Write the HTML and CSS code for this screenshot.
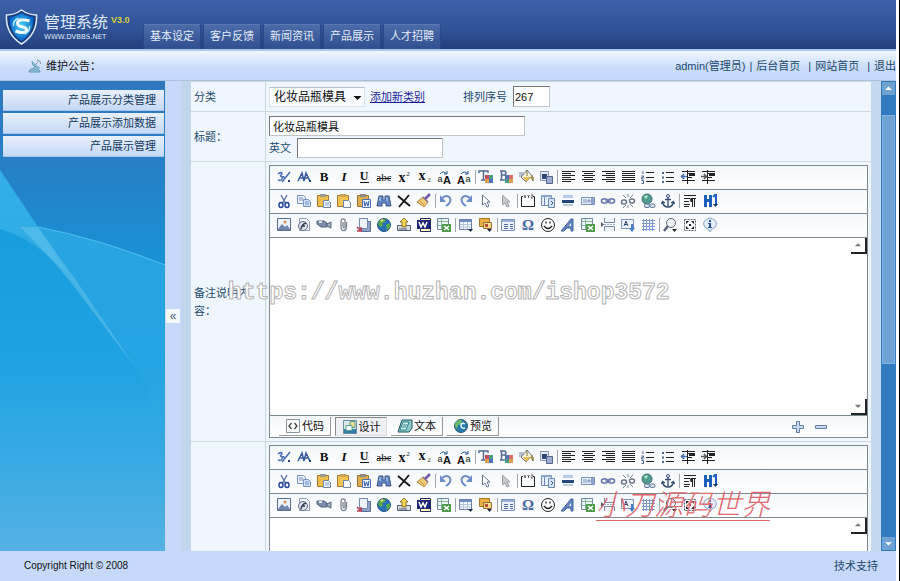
FILE: index.html
```html
<!DOCTYPE html>
<html lang="zh-CN">

<head>
    <meta charset="UTF-8">
    <meta name="viewport" content="width=device-width, initial-scale=1.0">
    <title>管理系统</title>
    <link rel="stylesheet" href="styles.css">
</head>

<body>
    <!-- Icons -->
    <svg class="sprite" aria-hidden="true">
        <symbol id="i-style" viewBox="0 0 16 16"><path d="M2 5q2-2 4-1 0 2-2 3 3 0 2 3-1 2-4 1M6 8q2-1 3 2M6 13l8-10" fill="none" stroke="#4a6fb8" stroke-width="1.6"/><path d="M12 11h2v2h-2z" fill="#26457f"/></symbol>
        <symbol id="i-font" viewBox="0 0 16 16"><path d="M2 12l4-8 2 8M3 9h5M8 12l2-8 4 8M9 9h3" fill="none" stroke="#3c5f9f" stroke-width="1.6"/><path d="M13 11h2v2h-2z" fill="#26457f"/></symbol>
        <symbol id="i-bold" viewBox="0 0 16 16"><text class="g-serif g-b" x="8" y="12" font-size="13">B</text></symbol>
        <symbol id="i-italic" viewBox="0 0 16 16"><text class="g-serif g-b" x="8" y="12" font-size="13" font-style="italic">I</text></symbol>
        <symbol id="i-underline" viewBox="0 0 16 16"><text class="g-serif g-b" x="8" y="11" font-size="12">U</text><path d="M4 13.500h9" stroke="#111"/></symbol>
        <symbol id="i-strike" viewBox="0 0 16 16"><text class="g-serif" x="8" y="12" font-size="11">abc</text><path d="M1 9.500h14" stroke="#111"/></symbol>
        <symbol id="i-sup" viewBox="0 0 16 16"><text class="g-serif g-b" x="6" y="13" font-size="14">x</text><text class="g-serif" x="12" y="7" font-size="7">2</text></symbol>
        <symbol id="i-sub" viewBox="0 0 16 16"><text class="g-serif g-b" x="6" y="11" font-size="14">x</text><text class="g-serif" x="13" y="13" font-size="7">2</text></symbol>
        <symbol id="i-upper" viewBox="0 0 16 16"><text class="g-sans" x="4" y="13" font-size="9">a</text><text class="g-sans g-b" x="11" y="15" font-size="11">A</text><path d="M4 5q3-4 7 0M11 2v3H8" fill="none" stroke="#27568f"/></symbol>
        <symbol id="i-lower" viewBox="0 0 16 16"><text class="g-sans g-b" x="5" y="15" font-size="11">A</text><text class="g-sans" x="12" y="13" font-size="9">a</text><path d="M5 5q3-4 7 0M12 2v3H9" fill="none" stroke="#27568f"/></symbol>
        <symbol id="i-color" viewBox="0 0 16 16"><path d="M1 4V2h9v2M5.500 2v9M3 11h4" fill="none" stroke="#536a94" stroke-width="1.500"/><path d="M7 6h4v4H7z" fill="#c44d60"/><path d="M11 6h4v4h-4z" fill="#4c9a80"/><path d="M7 10h4v4H7z" fill="#dfa04d"/><path d="M11 10h4v4h-4z" fill="#4d70bb"/></symbol>
        <symbol id="i-bgcolor" viewBox="0 0 16 16"><path d="M2 2h5q2 2 0 4H3h4q3 3 0 5H2M3.500 2v9" fill="none" stroke="#536a94" stroke-width="1.500"/><path d="M7 6h4v4H7z" fill="#5171b7"/><path d="M11 6h4v4h-4z" fill="#d76c70"/><path d="M7 10h4v4H7z" fill="#4c9a80"/><path d="M11 10h4v4h-4z" fill="#d9a251"/></symbol>
        <symbol id="i-bucket" viewBox="0 0 16 16"><path d="M1 3h5v5H1z" fill="#b7c1d2"/><path d="M9 1l5 6-6 6-5-5z" fill="#f8f3d6" stroke="#6d7690"/><path d="M9 1v6M14 6q2 3 1 6l-2-4" fill="#e8b03c" stroke="#7f744b"/><path d="M5 8h8l-5 5z" fill="#edbd54"/></symbol>
        <symbol id="i-layer" viewBox="0 0 16 16"><path d="M2.500 2.500h8v9h-8z" fill="#e7ecf7" stroke="#8291b0"/><path d="M4 5h5v5H4z" fill="#2d4578"/><path d="M8.500 7.500h6v7h-6z" fill="#9eadd0" stroke="#56688f"/></symbol>
        <symbol id="i-left" viewBox="0 0 16 16"><path d="M2 2.500h13M2 4.500h9M2 6.500h13M2 8.500h9M2 10.500h13M2 12.500h9" stroke="#222"/></symbol>
        <symbol id="i-center" viewBox="0 0 16 16"><path d="M2 2.500h13M4 4.500h9M2 6.500h13M4 8.500h9M2 10.500h13M4 12.500h9" stroke="#222"/></symbol>
        <symbol id="i-right" viewBox="0 0 16 16"><path d="M2 2.500h13M6 4.500h9M2 6.500h13M6 8.500h9M2 10.500h13M6 12.500h9" stroke="#222"/></symbol>
        <symbol id="i-justify" viewBox="0 0 16 16"><path d="M2 2.500h13M2 4.500h13M2 6.500h13M2 8.500h13M2 10.500h13M2 12.500h13" stroke="#222"/></symbol>
        <symbol id="i-ol" viewBox="0 0 16 16"><path d="M6 3.500h8M6 8.500h8M6 12.500h8" stroke="#222"/><path d="M3 2v3M1.500 7h2v1.500h-2V10h2M1.500 11.500h2v3h-2" fill="none" stroke="#4e6290"/></symbol>
        <symbol id="i-ul" viewBox="0 0 16 16"><path d="M6 3.500h8M6 8.500h8M6 12.500h8" stroke="#222"/><path d="M2 3h2v2H2zM2 7.500h2v2H2zM2 12h2v2H2z" fill="#4e6290"/></symbol>
        <symbol id="i-outdent" viewBox="0 0 16 16"><path d="M2 2.500h13M8 4.500h7M8 8.500h4M2 11.500h13M7.500 1v14" stroke="#222"/><path d="M9 5h6v2H9z" fill="#222"/><path d="M7 7.500H2M4 5L1.500 7.500 4 10" fill="none" stroke="#426bb0" stroke-width="1.500"/></symbol>
        <symbol id="i-indent" viewBox="0 0 16 16"><path d="M2 2.500h13M8 4.500h7M8 8.500h4M2 11.500h13M7.500 1v14" stroke="#222"/><path d="M9 5h6v2H9z" fill="#222"/><path d="M1 7.500h5M4 5l2.500 2.500L4 10" fill="none" stroke="#555" stroke-width="1.500"/></symbol>

        <symbol id="i-cut" viewBox="0 0 16 16"><path d="M5 2l5 9M11 2L6 11" stroke="#6279a8" stroke-width="1.500"/><ellipse cx="5" cy="12" rx="2" ry="2.500" fill="none" stroke="#27479a" stroke-width="1.500"/><ellipse cx="11" cy="12" rx="2" ry="2.500" fill="none" stroke="#27479a" stroke-width="1.500"/></symbol>
        <symbol id="i-copy" viewBox="0 0 16 16"><path d="M1.500 2.500h6l2 2v6h-8z" fill="#edf3ff" stroke="#7792c5"/><path d="M3 5h4M3 7h4" stroke="#7792c5"/><path d="M7.500 6.500h5l2 2v5h-7z" fill="#ccdcf7" stroke="#7792c5"/><path d="M9 9h4M9 11h4" stroke="#7792c5"/></symbol>
        <symbol id="i-paste" viewBox="0 0 16 16"><path d="M1.500 2.500h11v11h-11z" fill="#eebd4b" stroke="#9c7833"/><path d="M4 1h6v3H4z" fill="#9d9b91"/><path d="M7.500 7.500h5l2 2v5h-7z" fill="#f8fbff" stroke="#6c84b0"/><path d="M9 10h4M9 12h4" stroke="#8097c2"/></symbol>
        <symbol id="i-pastetext" viewBox="0 0 16 16"><path d="M1.500 2.500h11v11h-11z" fill="#f0c353" stroke="#9c7833"/><path d="M4 1h6v3H4z" fill="#c8a359"/><path d="M7.500 7.500h5l2 2v5h-7z" fill="#fff" stroke="#6c84b0"/></symbol>
        <symbol id="i-pasteword" viewBox="0 0 16 16"><path d="M1.500 2.500h11v11h-11z" fill="#dcae4b" stroke="#8c7541"/><path d="M4 1h6v3H4z" fill="#8e8d85"/><path d="M6.500 6.500h8v8h-8z" fill="#e6efff" stroke="#4b70b4"/><path d="M8 8l1 5 1.500-4 1.500 4 1-5" fill="none" stroke="#2f57a5"/></symbol>
        <symbol id="i-find" viewBox="0 0 16 16"><path d="M3 3h4v4h2V3h4l2 10h-5v-3H6v3H1z" fill="#6285c1" stroke="#3b5588"/><path d="M4 4v4M11 4v4" stroke="#c5d7f5"/></symbol>
        <symbol id="i-delete" viewBox="0 0 16 16"><path d="M2 3l12 10M13 2L3 14" stroke="#111" stroke-width="1.800"/></symbol>
        <symbol id="i-clean" viewBox="0 0 16 16"><path d="M14 1l-5 5" stroke="#755b9a" stroke-width="2.500"/><path d="M7 4l5 5-4 5-7-5z" fill="#f0ca75" stroke="#b18a3d"/><path d="M7 4l5 5" stroke="#7d6a8f" stroke-width="1.500"/><path d="M4 8l4 4" stroke="#c9923a"/></symbol>
        <symbol id="i-undo" viewBox="0 0 16 16"><path d="M4 5q5-4 8 0 2 4-4 8" fill="none" stroke="#6b8cc9" stroke-width="2"/><path d="M2 2v7h6z" fill="#6b8cc9"/></symbol>
        <symbol id="i-redo" viewBox="0 0 16 16"><path d="M12 5q-5-4-8 0-2 4 4 8" fill="none" stroke="#6b8cc9" stroke-width="2"/><path d="M14 2v7H8z" fill="#6b8cc9"/></symbol>
        <symbol id="i-select" viewBox="0 0 16 16"><path d="M4.500 2v10l2.500-2 2 4 2-1-2-4h3z" fill="#fff" stroke="#66738f"/></symbol>
        <symbol id="i-unselect" viewBox="0 0 16 16"><path d="M4.500 2v10l2.500-2 2 4 2-1-2-4h3z" fill="#c6c9d0" stroke="#9b9fa8"/></symbol>
        <symbol id="i-fieldset" viewBox="0 0 16 16"><path d="M3 3.500H1.500v10h13v-10H13" fill="none" stroke="#222"/><path d="M4 2l2 3M6 2L4 5M7.500 2l1 1.500L9.500 2M8.500 3v2M11 2h2l-2 3h2" fill="none" stroke="#444" stroke-width=".8"/></symbol>
        <symbol id="i-iframe" viewBox="0 0 16 16"><path d="M1.500 2.500h10v10h-10z" fill="#e6effc" stroke="#6f87af"/><path d="M1 2h11v2H1z" fill="#8aa4ce"/><path d="M4.500 4v8" stroke="#6f87af"/><path d="M8.500 5.500h6v9h-6z" fill="#d6e3f8" stroke="#6f87af"/><path d="M11 8l2 2-2 2" fill="none" stroke="#315f9e"/></symbol>
        <symbol id="i-hr" viewBox="0 0 16 16"><path d="M3 2h10v3H3zM3 11h10v2H3z" fill="#b5cbec"/><path d="M2 7h12v3H2z" fill="#26457f"/></symbol>
        <symbol id="i-marquee" viewBox="0 0 16 16"><path d="M1.500 4.500h13v7h-13z" fill="#e7eef9" stroke="#7d93b9"/><path d="M4 6v4M6 6v4M8 7h2v2H8z" stroke="#7d93b9" fill="none"/><path d="M11 5h3v6h-3z" fill="#8ba4cf"/></symbol>
        <symbol id="i-link" viewBox="0 0 16 16"><rect x="1.500" y="6" width="6" height="4" rx="2" fill="none" stroke="#5d75a4" stroke-width="1.500"/><rect x="8.500" y="6" width="6" height="4" rx="2" fill="none" stroke="#5d75a4" stroke-width="1.500"/><path d="M5 8h6" stroke="#5d75a4"/></symbol>
        <symbol id="i-unlink" viewBox="0 0 16 16"><rect x="1.500" y="7" width="5" height="4" rx="2" fill="none" stroke="#6a7488" stroke-width="1.500"/><rect x="9.500" y="6" width="5" height="4" rx="2" fill="none" stroke="#6a7488" stroke-width="1.500"/><path d="M3 2l3 3M8 1v3M13 2l-3 3M3 15l3-3M8 15v-3M13 14l-3-3" stroke="#7a8394"/></symbol>
        <symbol id="i-maplink" viewBox="0 0 16 16"><circle cx="7" cy="6" r="5" fill="#4d9c8d" stroke="#3d6f80"/><path d="M4 4q2-3 4-1l-2 3z" fill="#b9e3c6"/><rect x="4.500" y="11" width="5" height="3.500" rx="1.500" fill="#dce4f1" stroke="#5d6f93"/><rect x="10" y="11" width="5" height="3.500" rx="1.500" fill="#dce4f1" stroke="#5d6f93"/></symbol>
        <symbol id="i-anchor" viewBox="0 0 16 16"><circle cx="8" cy="3" r="1.500" fill="none" stroke="#354b73"/><path d="M8 4.500V14M5 6.500h6M2.500 9q1 5 5.500 5t5.500-5M1.500 11l1-2.500L5 10M14.500 11l-1-2.500L11 10" fill="none" stroke="#354b73" stroke-width="1.300"/></symbol>
        <symbol id="i-para" viewBox="0 0 16 16"><path d="M2 2.500h12M2 5.500h6M2 8.500h5M2 11.500h6M2 13.500h5M10.500 5v9M12.500 5v9M9 5.500h5" stroke="#222"/><path d="M11 5H9q-2 2 0 4h2z" fill="#222"/></symbol>
        <symbol id="i-h1" viewBox="0 0 16 16"><path d="M2 2h3v4h2V2h3v12H7V9H5v5H2z" fill="#1e5fbd"/><path d="M11 4l2-2h1v9" fill="none" stroke="#1e5fbd" stroke-width="2"/><path d="M11 11h5l-2.500 3z" fill="#1b3266"/></symbol>

        <symbol id="i-image" viewBox="0 0 16 16"><path d="M1.500 1.500h13v12h-13z" fill="#eef4fc" stroke="#5c6f92"/><path d="M2 12l4-5 3 3 2-2 3 4v1H2z" fill="#6f85ad"/><circle cx="9" cy="5" r="1.500" fill="#d88d55"/></symbol>
        <symbol id="i-flash" viewBox="0 0 16 16"><path d="M3.500 1.500h7l3 3v9h-10z" fill="#eff3fa" stroke="#93a0b9"/><circle cx="7" cy="9" r="4.500" fill="#dde3ec" stroke="#636e83"/><path d="M5 12q1-5 5-6M6 9h3" fill="none" stroke="#35415b" stroke-width="1.500"/></symbol>
        <symbol id="i-media" viewBox="0 0 16 16"><path d="M1 4h7l3 2v4H5L1 7z" fill="#7b8da8" stroke="#53627b"/><path d="M11 7l4-2v6l-4-2z" fill="#a2b0c5" stroke="#53627b"/><path d="M3 4h3v2H3z" fill="#dce5f1"/></symbol>
        <symbol id="i-attach" viewBox="0 0 16 16"><path d="M10.500 5v6q-1 3-3.500 2.500-2-.5-2-3V4q.5-2.500 2.500-2T9 4v6q-1 2-2 0V5" fill="none" stroke="#7d8593" stroke-width="1.300"/></symbol>
        <symbol id="i-file" viewBox="0 0 16 16"><path d="M5.500 4.500h9v10h-9z" fill="#8fa3c6" stroke="#5b6f97"/><path d="M3.500 1.500h8v10h-8z" fill="#edf3fc" stroke="#7488ad"/><path d="M1 10l4 4M1 14h4v-4" fill="none" stroke="#bd3e4c" stroke-width="1.500"/></symbol>
        <symbol id="i-globe" viewBox="0 0 16 16"><circle cx="8" cy="8" r="6.500" fill="#2a6fb9" stroke="#244f80"/><path d="M3 4q4-3 7-2l-1 3-3 1 1 3-3 1-2-3zM10 8l4-2v4l-3 3z" fill="#59ad48"/><path d="M5 4l2-1" stroke="#f1dd69" stroke-width="2"/></symbol>
        <symbol id="i-upload" viewBox="0 0 16 16"><path d="M1.500 8.500h13v5h-13z" fill="#dcdfe6" stroke="#555e70"/><path d="M8 1L4 5h2v5h4V5h2z" fill="#f5d650" stroke="#8b7428"/><path d="M3 12h8" stroke="#555e70"/></symbol>
        <symbol id="i-word" viewBox="0 0 16 16"><path d="M4.500 1.500h10v13h-10z" fill="#fff4b3" stroke="#222b66"/><path d="M1 3h13v9H1z" fill="#1c2877"/><path d="M3 5l2 5 2-4 2 4 2-5" fill="none" stroke="#fff" stroke-width="1.500"/></symbol>
        <symbol id="i-excel" viewBox="0 0 16 16"><path d="M1.500 1.500h11v11h-11z" fill="#eef6f3" stroke="#6a8aa0"/><path d="M2 4.500h10M2 8.500h10M5.500 2v10" stroke="#8ab2a3"/><path d="M6 7h9v8H6z" fill="#4c9b4b"/><path d="M8 9l5 4M13 9l-5 4" stroke="#fff" stroke-width="1.500"/></symbol>
        <symbol id="i-table" viewBox="0 0 16 16"><path d="M1.500 2.500h12v10h-12z" fill="#f3f7fd" stroke="#6b7fa9"/><path d="M2 3h11v2H2z" fill="#6e8fc5"/><path d="M2 7.500h11M2 10h11M5.500 5v7M9.500 5v7" stroke="#b9c7df"/><path d="M10 12h5l-2.500 3z" fill="#1c2748"/></symbol>
        <symbol id="i-object" viewBox="0 0 16 16"><path d="M1.500 1.500h10v8h-10z" fill="#eab044" stroke="#a9772c"/><path d="M5.500 5.500h8v6h-8z" fill="#f6d886" stroke="#976f36"/><path d="M7 7h3v3H7z" fill="#b94d3d"/><path d="M9 12h5l-2.500 3z" fill="#1c2748"/></symbol>
        <symbol id="i-form" viewBox="0 0 16 16"><path d="M1.500 2.500h13v11h-13z" fill="#edf3fd" stroke="#7a8fb7"/><path d="M2 3h12v2H2z" fill="#9cb1d7"/><path d="M4 7.500h4M10 7.500h3M4 9.500h4M10 9.500h3M4 11.500h4M10 11.500h3" stroke="#556b98"/></symbol>
        <symbol id="i-symbol" viewBox="0 0 16 16"><text class="g-blue g-b" x="8" y="13" font-size="15">Ω</text></symbol>
        <symbol id="i-smile" viewBox="0 0 16 16"><circle cx="8" cy="8" r="6.500" fill="#fff" stroke="#222"/><path d="M6 4.500v2M10 4.500v2M4 9q4 5 8 0" fill="none" stroke="#222" stroke-width="1.300"/></symbol>
        <symbol id="i-art" viewBox="0 0 16 16"><path d="M13 2v12h-2v-3H7l-3 3H1L11 2z" fill="#6284c0" stroke="#4462a0"/><path d="M11 6v3H9z" fill="#fff"/></symbol>
        <symbol id="i-break" viewBox="0 0 16 16"><path d="M4.500 1v4.500h10V1M4.500 14V9.500h10V14" fill="#eff3fa" stroke="#7787a6"/><path d="M4 7.500h11" stroke="#99a8c5" stroke-dasharray="2 1"/><path d="M1 5l3 2.500L1 10z" fill="#555"/></symbol>
        <symbol id="i-template" viewBox="0 0 16 16"><path d="M1.500 2.500h12v9h-12z" fill="#edf3fd" stroke="#7d91b7"/><path d="M4 9l2-5 2 5M5 7.500h2" fill="none" stroke="#334767"/><path d="M11 7h2v4h2l-3 4-3-4h2z" fill="#437bd0"/></symbol>
        <symbol id="i-grid" viewBox="0 0 16 16"><path d="M3.500 2v12M6.500 2v12M9.500 2v12M12.500 2v12M2 3.500h13M2 6.500h13M2 9.500h13M2 12.500h13" stroke="#7d9ace"/></symbol>
        <symbol id="i-zoom" viewBox="0 0 16 16"><circle cx="9" cy="6" r="4.500" fill="#eef2f9" stroke="#5c6678"/><path d="M6 9l-4 5" stroke="#5c6678" stroke-width="2.500"/><path d="M10 12h5l-2.500 3z" fill="#222"/></symbol>
        <symbol id="i-full" viewBox="0 0 16 16"><path d="M2.500 2.500h11v11h-11z" fill="#f7f9fc" stroke="#5c6678" stroke-dasharray="2 1"/><path d="M4 4h3L4 7zM12 4H9l3 3zM4 12h3L4 9zM12 12H9l3-3zM7 7h2v2H7z" fill="#222"/></symbol>
        <symbol id="i-about" viewBox="0 0 16 16"><path d="M8 1q6 1 6.500 6Q14 11 10 12l-2 3-2-3Q2 11 1.500 7 2 2 8 1z" fill="#e5effb" stroke="#8aa2c6"/><path d="M7 3h2v2H7zM6 6h3v4h1v1H6v-1h1V7H6z" fill="#2a5398"/></symbol>

        <symbol id="i-code" viewBox="0 0 16 16"><path d="M1.500 1.500h13v13h-13z" fill="#f8fafb" stroke="#8a949c"/><path d="M6.500 5L4 8l2.500 3M9.500 5L12 8l-2.500 3" fill="none" stroke="#444" stroke-width="1.300"/></symbol>
        <symbol id="i-design" viewBox="0 0 16 16"><path d="M1.500 1.500h13v13h-13z" fill="#d9ece9" stroke="#6d8f9f"/><path d="M2 10h12v4H2z" fill="#327da5"/><path d="M8 2.500h5v6H8z" fill="#efe48d" stroke="#58a08d"/><path d="M4 6.500h6v5H4z" fill="#f2fbf7" stroke="#58a08d"/></symbol>
        <symbol id="i-text" viewBox="0 0 16 16"><path d="M5 2h10v8l-3 4H1z" fill="#8bcbd0" stroke="#26535f"/><path d="M6 4h6l-3 8H3z" fill="#d1f3ef" stroke="#377e88"/><path d="M6 7h4M5 9h4" stroke="#377e88"/></symbol>
        <symbol id="i-preview" viewBox="0 0 16 16"><circle cx="8" cy="8" r="6.500" fill="#267cab" stroke="#2b5471"/><path d="M2 5q3-4 7-3l-1 4-3 1-1 4q-3-3-2-6z" fill="#6dba6a"/><path d="M12 6q-3-2-4 1 0 4 4 3" fill="none" stroke="#eefcfa" stroke-width="1.500"/></symbol>
        <symbol id="i-plus" viewBox="0 0 16 16"><path d="M6.500 2.500h3v4h4v3h-4v4h-3v-4h-4v-3h4z" fill="#c4d9ef" stroke="#667f9e"/></symbol>
        <symbol id="i-minus" viewBox="0 0 16 16"><path d="M2.500 6.500h11v3h-11z" fill="#c4d9ef" stroke="#667f9e"/></symbol>
        <symbol id="i-up" viewBox="0 0 16 16"><path d="M8 5l5 5H3z" fill="currentColor"/></symbol>
        <symbol id="i-down" viewBox="0 0 16 16"><path d="M8 11L3 6h10z" fill="currentColor"/></symbol>
    </svg>

    <!-- Header -->
    <header class="header">
        <div class="logo">
            <svg class="shield" viewBox="0 0 32 36">
                <defs>
                    <radialGradient id="shield" cx=".5" cy=".45">
                        <stop offset="0" stop-color="#48d4fb" />
                        <stop offset="1" stop-color="#0c67cb" />
                    </radialGradient>
                </defs>
                <path d="M16 1q7 5 15 5 1 19-15 29Q0 25 1 6q8 0 15-5z" fill="#173c7d" stroke="#dcecfb" stroke-width="1.500" />
                <path d="M16 4q6 4 12 4 0 16-12 24Q4 24 4 8q6 0 12-4z" fill="url(#shield)" />
                <path d="M24 12q-11-3-12 2 0 3 5 4t4 4q-3 3-11 0" fill="none" stroke="#effaff" stroke-width="3" />
                <path d="M8 17q-1-5 5-8M24 17q1 5-5 8" fill="none" stroke="#bdeefd" stroke-width="1.500" />
            </svg>
            <div class="name">
                <div class="title">管理系统</div>
                <div class="site">WWW.DVBBS.NET</div>
            </div>
            <div class="version">V3.0</div>
        </div>
        <nav class="nav">
            <a href="#">基本设定</a>
            <a href="#">客户反馈</a>
            <a href="#">新闻资讯</a>
            <a href="#">产品展示</a>
            <a href="#">人才招聘</a>
        </nav>
    </header>

    <!-- Notice bar -->
    <div class="notice">
        <svg class="dish" viewBox="0 0 14 14">
            <path d="M4 2q0 7 8 7M5 10l2-3M1 12l2-2h7l2 2v1H1z" fill="#8abbd4" stroke="#6399b8" />
            <path d="M7 6l3-3M9 1q3 0 4 4" fill="none" stroke="#7c8e9d" />
        </svg>
        <span class="notice-title">维护公告：</span>
        <div class="user">
            <a href="#">admin(管理员)</a><span>|</span>
            <a href="#">后台首页</a><span class="sep">|</span><a href="#">网站首页</a><span class="sep">|</span>
            <a href="#">退出</a>
        </div>
    </div>

    <div class="main">
        <!-- Left menu -->
        <aside class="sidebar">
            <svg class="waves" viewBox="0 0 165 470" preserveAspectRatio="none" aria-hidden="true">
                <defs>
                    <linearGradient id="fade" x1="0" y1="0" x2="0" y2="1">
                        <stop offset="0" stop-color="#2fb1ea" stop-opacity=".8" />
                        <stop offset="1" stop-color="#2fb1ea" stop-opacity="0" />
                    </linearGradient>
                    <linearGradient id="deep" x1="0" y1="0" x2="0" y2="1">
                        <stop offset="0" stop-color="#109bdc" stop-opacity=".7" />
                        <stop offset=".6" stop-color="#109bdc" stop-opacity="0" />
                    </linearGradient>
                </defs>
                <path d="M0 89L38 146Q100 158 165 184V470H0z" fill="url(#fade)" />
                <path d="M0 148Q40 160 75 203L135 286Q150 310 158 342L165 470H0z" fill="url(#deep)" />
                <path d="M0 89L38 146 75 203Q40 158 0 148z" fill="#37b5e8" fill-opacity=".5" />
                <path d="M38 146L75 198 135 286 72 203Q50 175 20 146z" fill="#7ccdf0" fill-opacity=".4" />
                <path d="M38 146Q100 158 165 184" fill="none" stroke="#52c0ef" />
            </svg>
            <a href="#">产品展示分类管理</a>
            <a href="#">产品展示添加数据</a>
            <a href="#">产品展示管理</a>
        </aside>

        <div class="splitter">
            <button type="button" title="收起">«</button>
        </div>

        <!-- Product form -->
        <form class="content">
            <div class="row">
                <div class="label">分类</div>
                <div class="field line">
                    <div class="select">
                        <select aria-label="分类">
                            <option>化妆品瓶模具</option>
                        </select>
                        <svg viewBox="0 0 16 16"><use href="#i-down" /></svg>
                    </div>
                    <a class="add" href="#">添加新类别</a>
                    <label for="order">排列序号</label>
                    <input type="text" id="order" class="order" value="267">
                </div>
            </div>
            <div class="row">
                <label class="label" for="title">标题：</label>
                <div class="field">
                    <input type="text" id="title" class="cn" value="化妆品瓶模具">
                    <div class="line">
                        <label for="titleEn">英文</label>
                        <input type="text" id="titleEn" class="en">
                    </div>
                </div>
            </div>
            <div class="row">
                <div class="label">备注说明内容：</div>
                <div class="field">
                    <div class="editor"></div>
                </div>
            </div>
            <div class="row">
                <div class="label"></div>
                <div class="field">
                    <div class="editor"></div>
                </div>
            </div>
        </form>

        <div class="scroll">
            <button type="button" aria-label="向上"><svg viewBox="0 0 16 16"><use href="#i-up" /></svg></button>
            <div class="track">
                <div class="thumb"></div>
            </div>
            <button type="button" aria-label="向下"><svg viewBox="0 0 16 16"><use href="#i-down" /></svg></button>
        </div>
    </div>

    <footer class="footer">
        <span class="copy">Copyright Right © 2008</span>
        <a href="#">技术支持</a>
    </footer>

    <div class="mark mark-url">https://www.huzhan.com/ishop3572</div>
    <div class="mark mark-name">小刀源码世界</div>

    <script src="script.js"></script>
</body>

</html>
```
FILE: styles.css
```css
* {
    box-sizing: border-box;
}

body {
    margin: 0;
    height: 100vh;
    display: flex;
    flex-direction: column;
    overflow: hidden;
    padding-right: 3px;
    border-right: 1px solid black;
    background-color: white;
    color: #1d4a6c;
    font-family: "Liberation Sans", "Noto Sans CJK SC", sans-serif;
    font-size: 11px;
    line-height: 18px;
}

a {
    color: inherit;
    text-decoration: none;
}

input,
select,
button,
textarea {
    font: inherit;
    margin: 0;
    border-radius: 0;
}

button {
    display: flex;
    align-items: center;
    justify-content: center;
    padding: 0;
    border: none;
    background: none;
}

.sprite {
    display: none;
}

.g-serif,
.g-sans,
.g-blue {
    text-anchor: middle;
    fill: #111;
    font-family: "Liberation Serif", serif;
}

.g-sans {
    font-family: "Liberation Sans", sans-serif;
}

.g-blue {
    fill: #4465a8;
}

.g-b {
    font-weight: 700;
}

/* header */
.header {
    flex: none;
    display: flex;
    align-items: flex-end;
    height: 49px;
    background: linear-gradient(#3d61a9, #305296 60%, #243f7d);
}

.logo {
    display: flex;
    align-items: flex-start;
    width: 143px;
    height: 40px;
    padding-left: 5px;
}

.shield {
    width: 33px;
    height: 36px;
}

.name {
    margin: 4px 3px 0 6px;
    color: #dfe9f7;
}

.title {
    font-size: 16px;
    line-height: 20px;
}

.site {
    font-family: "DejaVu Sans", sans-serif;
    font-size: 7px;
    line-height: 9px;
}

.version {
    color: #d3d03c;
    font-size: 9px;
    font-weight: 700;
    line-height: 22px;
}

.nav {
    display: flex;
    gap: 2px;
}

.nav a {
    width: 58px;
    height: 25px;
    border: 1px solid #2a478a;
    border-top-color: #5877b3;
    border-bottom: none;
    border-radius: 2px 2px 0 0;
    background: linear-gradient(#4b6ba8, #2f4f90);
    color: #e3ecfa;
    line-height: 23px;
    text-align: center;
}

/* notice bar */
.notice {
    flex: none;
    display: flex;
    align-items: center;
    height: 32px;
    padding-left: 28px;
    border-top: 2px solid #a9c9ec;
    border-bottom: 1px solid #adc3dd;
    background: linear-gradient(#f0f6ff, #c9dcfb 60%, #c5d9fa);
}

.dish {
    width: 14px;
    height: 14px;
    margin-right: 4px;
}

.notice-title {
    color: #111;
}

.user {
    display: flex;
    gap: 4px;
    margin-left: auto;
}

.user .sep {
    margin-left: 4px;
}

/* main */
.main {
    flex: 1;
    min-height: 0;
    display: flex;
}

.sidebar {
    position: relative;
    flex: none;
    display: flex;
    flex-direction: column;
    gap: 2px;
    width: 165px;
    padding: 9px 1px 0 3px;
    background: linear-gradient(#2f78bf, #2581c8 20%, #1893d6 40%, #1d9ddf 60%, #56b2e4);
}

.waves {
    position: absolute;
    inset: 0;
    width: 100%;
    height: 100%;
}

.sidebar a {
    position: relative;
    height: 21px;
    padding-right: 8px;
    border-bottom: 1px solid #a9c4e8;
    background: linear-gradient(#e8f0fc, #c4d8f6);
    color: #14395c;
    line-height: 20px;
    text-align: right;
}

.splitter {
    flex: none;
    display: flex;
    align-items: center;
    width: 26px;
    border-right: 10px solid #c1d5ec;
    background-color: #c6d9f9;
}

.splitter button {
    width: 14px;
    height: 14px;
    margin: 0 1px;
    background-color: #f3f8fc;
    color: #4c5f70;
    font-size: 12px;
}

.content {
    flex: 1;
    min-width: 0;
    display: flex;
    flex-direction: column;
    overflow: hidden;
    border-right: 10px solid #c4daee;
    background-color: #eff6fe;
}

.row {
    flex: none;
    display: flex;
    border-top: 1px solid #cbd8e2;
}

.label {
    flex: none;
    display: flex;
    align-items: center;
    width: 75px;
    padding: 0 14px 0 3px;
    border-right: 1px solid #cbd8e2;
}

.field {
    flex: 1;
    min-width: 0;
    padding: 3px;
}

.line {
    display: flex;
    align-items: center;
}

.field input {
    display: block;
    height: 20px;
    padding: 0 3px;
    border: 1px solid #c0c4c8;
    border-top-color: #777;
    border-left-color: #777;
    background-color: white;
    color: #111;
}

.field .order {
    width: 37px;
    height: 21px;
    padding: 0 1px;
    margin-left: 6px;
}

.row:first-child .field {
    height: 29px;
}

.field .cn {
    width: 256px;
    margin: 1px 0 2px;
}

.field .en {
    width: 146px;
    margin-left: 6px;
}

.select {
    position: relative;
    margin-right: 5px;
}

.select select {
    appearance: none;
    display: block;
    width: 96px;
    height: 20px;
    padding: 0 4px;
    border: 1px solid #dde4ea;
    border-top-color: #b9c0c6;
    background-color: #f7fafe;
    color: #111;
    font-size: 12px;
}

.select svg {
    position: absolute;
    top: 4px;
    right: 1px;
    width: 13px;
    height: 13px;
    color: #111;
    pointer-events: none;
}

.add {
    margin-right: 38px;
    color: #1d1f9a;
    text-decoration: underline;
}

/* editor */
.editor {
    border: 1px solid #7e8a92;
    background-color: white;
}

.tools {
    display: flex;
    align-items: center;
    height: 24px;
    padding: 0 0 2px 4px;
    border-bottom: 1px solid #7e8a92;
    background: linear-gradient(#f4f8fb, #fff);
}

.tools button {
    width: 20px;
    height: 20px;
}

.tools svg,
.modes svg {
    width: 16px;
    height: 16px;
}

.tools i {
    width: 2px;
    height: 14px;
    border-right: 1px solid #a0a8b0;
}

.area {
    display: flex;
    height: 178px;
    border-bottom: 1px solid #7e8a92;
}

.area textarea {
    flex: 1;
    border: none;
    outline: none;
    resize: none;
}

.area div {
    display: flex;
    flex-direction: column;
    justify-content: space-between;
}

.area button {
    width: 16px;
    height: 16px;
    border-right: 2px solid #222;
    border-bottom: 2px solid #222;
    color: #777;
}

.area svg {
    width: 10px;
    height: 10px;
}

.modes {
    display: flex;
    align-items: center;
    gap: 4px;
    height: 21px;
    padding: 0 38px 0 9px;
    background: linear-gradient(#f4f8fb, #fff);
}

.modes button {
    gap: 1px;
    width: 52px;
    height: 19px;
    border-right: 1px solid #999;
    border-bottom: 1px solid #999;
    color: #111;
}

.modes .active {
    border: 1px solid #ddd;
    border-top-color: #888;
    border-left-color: #888;
    background-color: #eef0f4;
}

.modes .size {
    width: 16px;
    border: none;
}

.modes .grow {
    margin-left: auto;
    margin-right: 3px;
}

/* page scrollbar */
.scroll {
    flex: none;
    display: flex;
    flex-direction: column;
    width: 15px;
    padding: 1px;
    background-color: #337bc1;
}

.scroll button {
    width: 13px;
    height: 13px;
    background-color: #6da2d2;
    color: white;
}

.scroll svg {
    width: 11px;
    height: 11px;
}

.track {
    flex: 1;
    padding-top: 20px;
}

.thumb {
    height: 59%;
    border: 1px solid #86b4dc;
    background-color: #6da2d2;
}

/* footer */
.footer {
    flex: none;
    display: flex;
    align-items: center;
    justify-content: space-between;
    height: 30px;
    padding: 0 18px 0 24px;
    background-color: #c6d9f9;
}

.copy {
    color: #111;
    font-size: 10px;
}

/* watermarks */
.mark {
    position: absolute;
    pointer-events: none;
    white-space: nowrap;
}

.mark-url {
    top: 278px;
    left: 228px;
    color: white;
    font-family: "Liberation Mono", monospace;
    font-size: 23px;
    font-weight: 700;
    line-height: 30px;
    -webkit-text-stroke: 1px #b4b4b4;
}

.mark-name {
    top: 490px;
    left: 596px;
    border-bottom: 1px solid #e0686e;
    color: #e0686e;
    font-size: 29px;
    font-style: italic;
    font-weight: 300;
    line-height: 30px;
}
```
FILE: script.js
```js
// toolbar rows, "|" is a separator
const rows = [
    'style font bold italic underline strike sup sub upper lower | color bgcolor bucket layer | left center right justify ol ul outdent indent',
    'cut copy paste pastetext pasteword find delete clean | undo redo select unselect | fieldset iframe hr marquee link unlink maplink anchor | para h1',
    'image flash media attach file globe upload word excel | table object | form symbol smile art excel break template grid | zoom full about'
];

const modes = [['code', '代码'], ['design', '设计'], ['text', '文本'], ['preview', '预览']];

function icon(name) {
    return `<svg viewBox="0 0 16 16"><use href="#i-${name}"/></svg>`;
}

function button(name, text = '', cls = '') {
    return `<button type="button" aria-label="${text || name}" class="${cls}">${icon(name)}${text}</button>`;
}

function tools(row) {
    return `<div class="tools">${row.split(' ').map(n => n === '|' ? '<i></i>' : button(n)).join('')}</div>`;
}

document.querySelectorAll('.editor').forEach(el => {
    el.innerHTML = rows.map(tools).join('') +
        `<div class="area"><textarea aria-label="内容"></textarea><div>${button('up')}${button('down')}</div></div>` +
        `<div class="modes">${modes.map(([n, t]) => button(n, t, n === 'design' ? 'active' : '')).join('')}` +
        `${button('plus', '', 'size grow')}${button('minus', '', 'size')}</div>`;
});
```
